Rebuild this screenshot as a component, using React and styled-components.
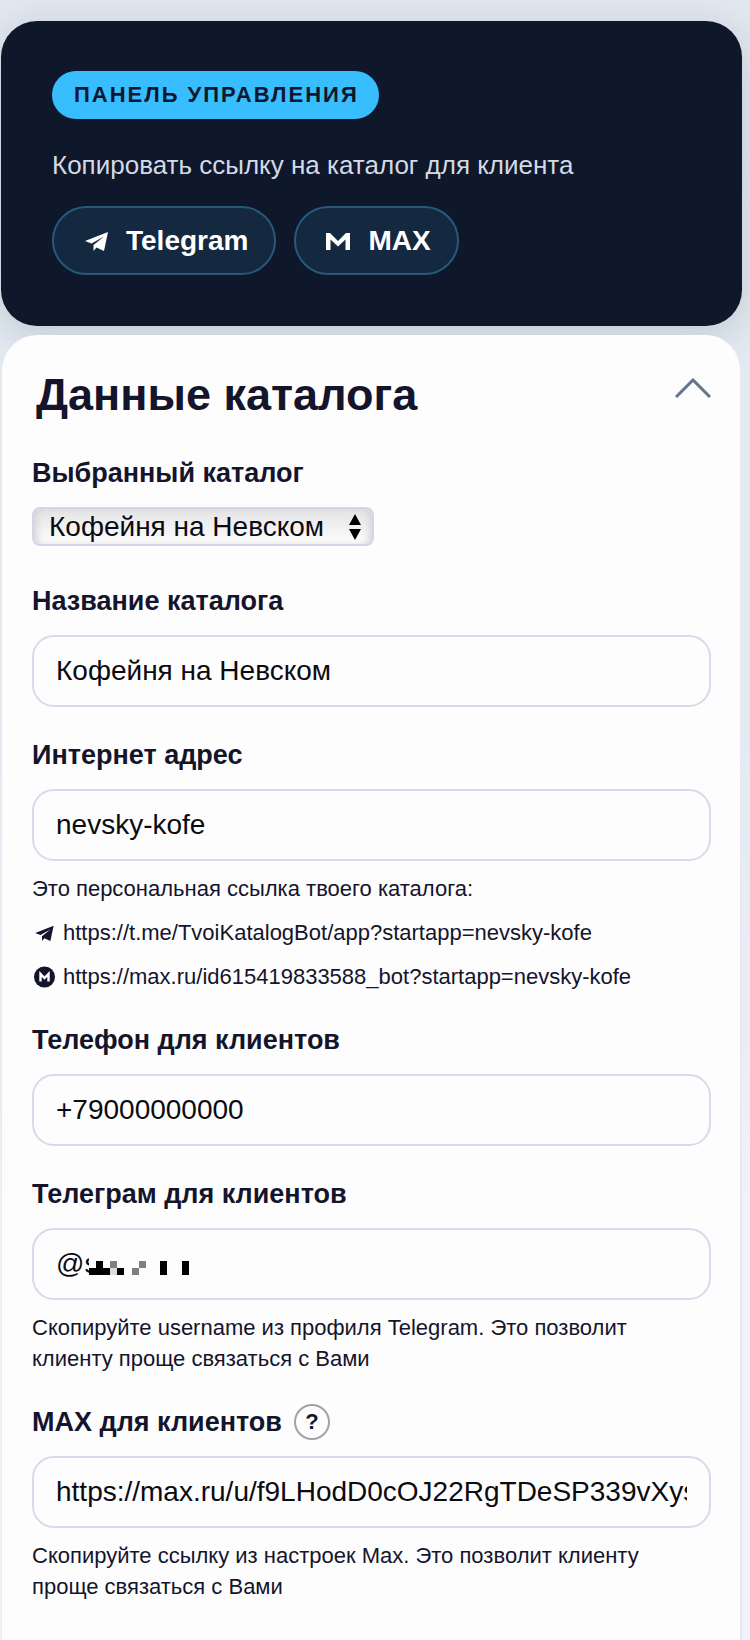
import React, { useState } from "react";
import styled, { createGlobalStyle } from "styled-components";

const App = () => {
  // CATALOG FORM STATE
  const [catalog, setCatalog] = useState({
    selected: "Кофейня на Невском",
    title: "Кофейня на Невском",
    slug: "nevsky-kofe",
    phone: "+79000000000",
    telegram: "@s",
    max: "https://max.ru/u/f9LHodD0cOJ22RgTDeSP339vXys7"
  });

  // Toggle for the catalog section
  const [open, setOpen] = useState(true);

  const handleChange = e => {
    setCatalog({ ...catalog, [e.target.name]: e.target.value });
  };

  const telegramLink = "https://t.me/TvoiKatalogBot/app?startapp=nevsky-kofe";
  const maxLink = "https://max.ru/id615419833588_bot?startapp=nevsky-kofe";

  return (
    <Page>
      <GlobalStyle />
      <Hero>
        <Badge>Панель управления</Badge>
        <HeroText>Копировать ссылку на каталог для клиента</HeroText>
        <ButtonRow>
          <CopyButton type="button">
            <TelegramIcon viewBox="0 0 24 24" />
            Telegram
          </CopyButton>
          <CopyButton type="button">
            <MaxIcon />
            MAX
          </CopyButton>
        </ButtonRow>
      </Hero>

      <Card>
        <CardHeader
          type="button"
          aria-expanded={open}
          onClick={() => setOpen(!open)}
        >
          <CardTitle>Данные каталога</CardTitle>
          <Chevron $open={open} viewBox="0 0 36 20" aria-hidden="true">
            <path d="M1 19 18 2l17 17" />
          </Chevron>
        </CardHeader>

        {open && (
          <Form onSubmit={e => e.preventDefault()}>
            <Field>
              <Label htmlFor="selected">Выбранный каталог</Label>
              <SelectWrapper>
                <Select
                  id="selected"
                  name="selected"
                  value={catalog.selected}
                  onChange={handleChange}
                >
                  <option>Кофейня на Невском</option>
                </Select>
                <SelectArrows viewBox="0 0 12 26" aria-hidden="true">
                  <path d="M6 0l6 11H0zM6 26l6-11H0z" />
                </SelectArrows>
              </SelectWrapper>
            </Field>

            <Field>
              <Label htmlFor="title">Название каталога</Label>
              <Input
                id="title"
                name="title"
                value={catalog.title}
                onChange={handleChange}
              />
            </Field>

            <Field>
              <Label htmlFor="slug">Интернет адрес</Label>
              <Input
                id="slug"
                name="slug"
                value={catalog.slug}
                onChange={handleChange}
              />
              <Links>
                <Hint>Это персональная ссылка твоего каталога:</Hint>
                <HintLink href={telegramLink}>
                  <TelegramIcon viewBox="-3 -3 30 30" />
                  {telegramLink}
                </HintLink>
                <HintLink href={maxLink}>
                  <MaxRoundIcon />
                  {maxLink}
                </HintLink>
              </Links>
            </Field>

            <Field>
              <Label htmlFor="phone">Телефон для клиентов</Label>
              <Input
                id="phone"
                name="phone"
                type="tel"
                value={catalog.phone}
                onChange={handleChange}
              />
            </Field>

            <Field>
              <Label htmlFor="telegram">Телеграм для клиентов</Label>
              <InputWrapper>
                <Input
                  id="telegram"
                  name="telegram"
                  value={catalog.telegram}
                  onChange={handleChange}
                />
                <Mosaic />
              </InputWrapper>
              <Hint>
                Скопируйте username из профиля Telegram. Это позволит клиенту
                проще связаться с Вами
              </Hint>
            </Field>

            <Field>
              <LabelRow>
                <Label htmlFor="max">MAX для клиентов</Label>
                <HelpButton type="button" aria-label="Помощь">
                  ?
                </HelpButton>
              </LabelRow>
              <Input
                id="max"
                name="max"
                value={catalog.max}
                onChange={handleChange}
              />
              <Hint>
                Скопируйте ссылку из настроек Max. Это позволит клиенту проще
                связаться с Вами
              </Hint>
            </Field>
          </Form>
        )}
      </Card>
    </Page>
  );
};

// ICONS
const TelegramIcon = ({ viewBox }) => (
  <Icon viewBox={viewBox} aria-hidden="true">
    <path d="M24 3 20 22 12.500 18.500 9.500 22V16L20 7.500 7.500 14.500 1 12z" />
  </Icon>
);

const MaxIcon = () => (
  <Icon viewBox="0 0 24 24" aria-hidden="true">
    <path d="M0 21V4h4l8 8 8-8h4v17h-4.500V10.500L12 17.500 4.500 10.500V21z" />
  </Icon>
);

const MaxRoundIcon = () => (
  <Icon viewBox="0 0 24 24" aria-hidden="true">
    <circle cx="12.500" cy="12" r="10.500" />
    <path
      d="M8.500 16.500V9L12.500 13 16.500 9v7.500"
      fill="none"
      stroke="#fff"
      strokeWidth="2.400"
    />
  </Icon>
);

// Pixel blocks that hide the rest of the username
const Mosaic = () => (
  <MosaicSvg viewBox="0 0 105 28" aria-hidden="true">
    <path fill="#fdfdfe" d="M5 0h100v28H5z" />
    <path
      fill="#000"
      d="M5 14h21v7H5zM12 7h7v7h-7zM33 14h7v7h-7zM76 7h7v14h-7zM98 7h7v14h-7z"
    />
    <path fill="#808080" d="M26 7h7v7h-7zM48 14h7v7h-7zM55 7h7v7h-7z" />
    <path fill="#dcdcdc" d="M26 14h7v7h-7z" />
  </MosaicSvg>
);

const GlobalStyle = createGlobalStyle`
  * {
    box-sizing: border-box;
  }

  body {
    margin: 0;
    min-height: 100vh;
    background: linear-gradient(180deg, #e2e8f0 0%, #e2ebf3 45%, #ececf6 62%, #f1f0fb 72%);
    color: #14142b;
    font-family: "Liberation Sans", Arial, Helvetica, sans-serif;
  }

  button,
  input,
  select {
    font-family: inherit;
  }
`;

const Page = styled.main`
  display: flex;
  flex-direction: column;
  gap: 9px;
  padding: 21px 8px 0 1px;
`;

const Hero = styled.section`
  display: flex;
  flex-direction: column;
  align-items: flex-start;
  padding: 50px 51px 51px;
  border-radius: 36px;
  background: #0f172a;
  box-shadow: 0 8px 40px rgba(15, 23, 42, 0.16);
`;

const Badge = styled.span`
  padding: 0 20px 0 22px;
  border-radius: 24px;
  background: #38bdff;
  color: #0f172a;
  font-size: 22px;
  font-weight: 700;
  line-height: 48px;
  letter-spacing: 2px;
  text-transform: uppercase;
`;

const HeroText = styled.p`
  margin: 30px 0 25px;
  color: #d3d9e6;
  font-size: 26px;
  line-height: 32px;
`;

const ButtonRow = styled.div`
  display: flex;
  flex-wrap: wrap;
  gap: 18px;
`;

const CopyButton = styled.button`
  display: flex;
  align-items: center;
  gap: 18px;
  height: 69px;
  padding: 0 26px 0 30px;
  border: 2px solid #26597a;
  border-radius: 35px;
  background: #14283f;
  color: #fff;
  font-size: 28px;
  font-weight: 700;
  cursor: pointer;
`;

const Card = styled.section`
  padding: 32px 29px 60px 30px;
  border: solid #e8e8ee;
  border-width: 0 2px 0 1px;
  border-radius: 36px 36px 0 0;
  background: #fdfdfe;
`;

const CardHeader = styled.button`
  display: flex;
  align-items: center;
  justify-content: space-between;
  width: 100%;
  padding: 0 0 0 4px;
  border: none;
  background: none;
  color: inherit;
  cursor: pointer;
`;

const CardTitle = styled.span`
  font-size: 45px;
  font-weight: 700;
  line-height: 56px;
`;

const Chevron = styled.svg`
  width: 36px;
  height: 20px;
  margin-bottom: 14px;
  fill: none;
  stroke: #64748b;
  stroke-width: 3px;
  transform: ${props => (props.$open ? "none" : "rotate(180deg)")};
`;

const Form = styled.form`
  display: flex;
  flex-direction: column;
  gap: 33px;
  margin-top: 35px;
`;

const Field = styled.div`
  display: flex;
  flex-direction: column;
`;

const Label = styled.label`
  margin-bottom: 19px;
  font-size: 27px;
  font-weight: 700;
  line-height: 30px;
`;

const LabelRow = styled.div`
  display: flex;
  align-items: flex-start;
  gap: 12px;
`;

const HelpButton = styled.button`
  width: 36px;
  height: 36px;
  margin: -3px 0;
  padding: 0;
  border: 2px solid #a3a3a8;
  border-radius: 50%;
  background: none;
  color: inherit;
  font-size: 22px;
  font-weight: 700;
  cursor: pointer;
`;

const SelectWrapper = styled.div`
  position: relative;
  align-self: flex-start;
  margin-bottom: 7px;
`;

const Select = styled.select`
  appearance: none;
  display: block;
  height: 39px;
  padding: 0 47px 0 15px;
  border: 2px solid #d5d5ea;
  border-radius: 8px;
  background: linear-gradient(180deg, #e4e4e6, #fdfdfd);
  box-shadow: inset 6px 0 8px -4px #cfcfd4, inset -6px 0 8px -4px #cfcfd4;
  color: #0b0b0f;
  font-size: 28px;
`;

const SelectArrows = styled.svg`
  position: absolute;
  top: 7px;
  right: 13px;
  width: 12px;
  height: 26px;
  pointer-events: none;
`;

const InputWrapper = styled.div`
  position: relative;
`;

const Input = styled.input`
  width: 100%;
  height: 72px;
  padding: 0 22px;
  border: 2px solid #d9d9ea;
  border-radius: 22px;
  background: #fdfdfe;
  color: #0b0b0f;
  font-size: 28px;
  outline: none;
`;

const MosaicSvg = styled.svg`
  position: absolute;
  top: 26px;
  left: 52px;
  width: 105px;
  height: 28px;
  pointer-events: none;
`;

const Hint = styled.p`
  margin: 12px 0 0;
  font-size: 22px;
  line-height: 31px;
`;

const Links = styled.div`
  display: flex;
  flex-direction: column;
  align-items: flex-start;
  gap: 13px;
`;

const HintLink = styled.a`
  display: flex;
  align-items: center;
  gap: 7px;
  color: inherit;
  font-size: 22px;
  line-height: 31px;
  text-decoration: none;
`;

const Icon = styled.svg`
  flex-shrink: 0;
  width: 24px;
  height: 24px;
  fill: currentColor;
`;

export default App;
